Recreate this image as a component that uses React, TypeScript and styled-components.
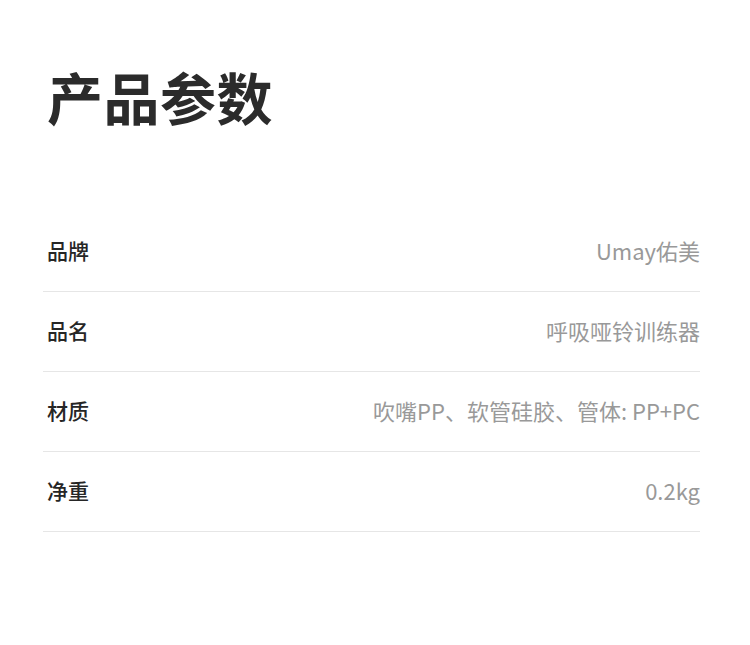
import React from "react";
import styled, { createGlobalStyle } from "styled-components";

const Global = createGlobalStyle`
  html, body { margin: 0; padding: 0; background: #fff; }
  body { font-family: "Noto Sans CJK SC", "Noto Sans", sans-serif; }
`;

const Page = styled.div`
  width: 750px;
  height: 645px;
  box-sizing: border-box;
  padding: 60px 50px 0 43px;
  background: #fff;
`;

const Title = styled.h1`
  margin: 0 0 0 4px;
  font-size: 56px;
  line-height: 72px;
  font-weight: 700;
  color: #2b2b2b;
  letter-spacing: 0.5px;
`;

const Table = styled.div`
  margin-top: 80px;
  display: flex;
  flex-direction: column;
`;

const Row = styled.div`
  height: 80px;
  box-sizing: border-box;
  display: flex;
  align-items: center;
  justify-content: space-between;
  border-bottom: 1px solid #e6e6e6;
  padding: 0 0 4px 4px;
`;

const Label = styled.span`
  font-size: 21px;
  font-weight: 500;
  color: #262626;
`;

const Value = styled.span`
  font-size: 22px;
  color: #999;
  font-weight: 400;
`;

const rows: [string, string][] = [
  ["品牌", "Umay佑美"],
  ["品名", "呼吸哑铃训练器"],
  ["材质", "吹嘴PP、软管硅胶、管体: PP+PC"],
  ["净重", "0.2kg"],
];

export default function App() {
  return (
    <>
      <Global />
      <Page>
        <Title>产品参数</Title>
        <Table>
          {rows.map(([k, v]) => (
            <Row key={k}>
              <Label>{k}</Label>
              <Value>{v}</Value>
            </Row>
          ))}
        </Table>
      </Page>
    </>
  );
}
